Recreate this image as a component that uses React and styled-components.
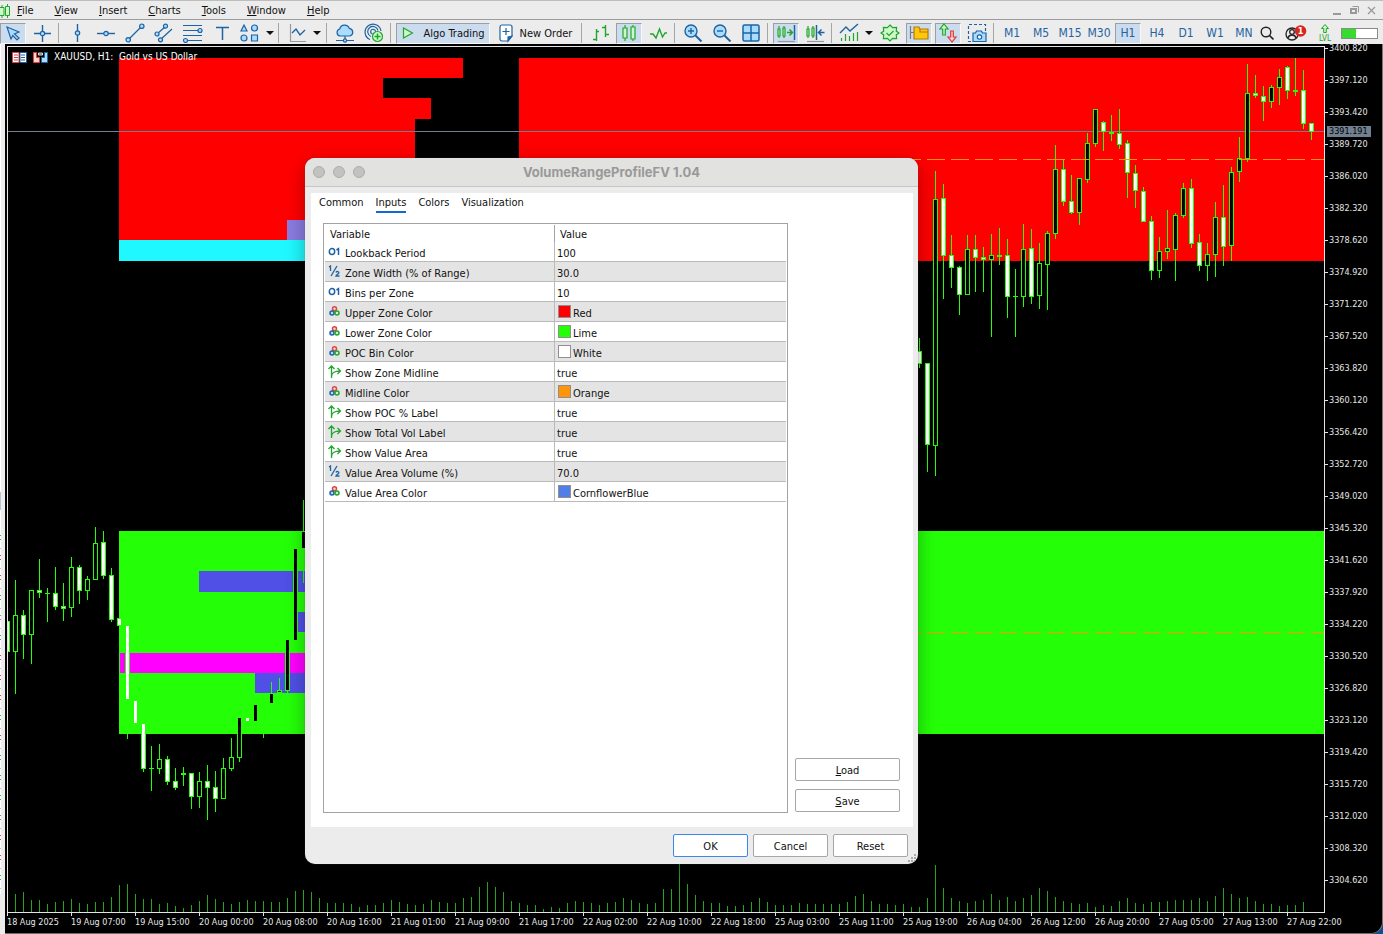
import React from 'react';
import styled, { createGlobalStyle } from 'styled-components';

const GlobalStyle = createGlobalStyle`
    * { box-sizing: border-box; }

    body {
        margin: 0;
        background: #000;
        font-family: "DejaVu Sans Condensed", "Noto Sans", sans-serif;
        font-size: 11px;
        color: #111;
    }

    button {
        font: inherit;
        color: inherit;
        cursor: pointer;
    }
`;

const BLUE = '#1f63a3';
const SKY = '#a9dcff';
const GREEN = '#22a52c';
const MINT = '#cdf8c8';
const LIME = '#24ff08';

/* ---------- layout ---------- */

const Terminal = styled.div`
    height: 100vh;
    display: flex;
    flex-direction: column;
    position: relative;
    overflow: hidden;
    background: #ececec;
`;

const MenuBar = styled.nav`
    display: flex;
    align-items: center;
    height: 20px;
    padding-top: 2px;
    border-top: 1px solid #bdbdbd;
    border-bottom: 1px solid #9c9c9c;
`;

const MenuIcon = styled.svg`
    width: 11px;
    height: 17px;
    margin-right: 6px;
`;

const MenuItem = styled.button`
    border: 0;
    padding: 0;
    margin-right: 21px;
    background: none;
    line-height: 14px;
`;

const WindowButtons = styled.div`
    display: flex;
    align-items: center;
    gap: 6px;
    margin-left: auto;
    padding: 0 5px 2px 0;
`;

const WindowButton = styled.button`
    border: 0;
    padding: 0;
    width: 12px;
    height: 12px;
    background: none;

    svg { display: block; }
`;

const ToolBar = styled.div`
    display: flex;
    align-items: center;
    gap: 3px;
    height: 24px;
    padding-top: 2px;
    flex: none;
`;

const Tool = styled.button`
    display: flex;
    align-items: center;
    justify-content: center;
    gap: ${p => p.$gap || 0}px;
    flex: none;
    width: ${p => p.$width || 26}px;
    height: 21px;
    padding: 0;
    border: 1px solid transparent;
    border-color: ${p => (p.$active ? '#9a9fa6 #f8f8f8 #f8f8f8 #9a9fa6' : 'transparent')};
    background: ${p => (p.$active ? '#cbdcee' : 'none')};
    white-space: nowrap;

    svg { display: block; flex: none; }
`;

const Timeframe = styled(Tool)`
    font-size: 12px;
    color: ${BLUE};
`;

const Separator = styled.span`
    flex: none;
    width: 3px;
    height: 20px;
    border-left: 1px solid #a5a5a5;
`;

const Status = styled.div`
    display: flex;
    align-items: center;
    gap: 9px;
    margin-left: auto;
    padding-right: 7px;
`;

const Meter = styled.div`
    width: 37px;
    height: 11px;
    border: 1px solid #8a8a8a;
    background: linear-gradient(to right, #37dd2e 41%, #fff 41%);
`;

const Workspace = styled.main`
    flex: 1;
    min-height: 0;
    display: grid;
    grid-template-columns: 5px minmax(0, 1fr);
    background: #0b4f94;
`;

const Chart = styled.section`
    position: relative;
    display: grid;
    grid-template-columns: minmax(0, 1fr) 57px;
    grid-template-rows: minmax(0, 1fr) 20px;
    background: #000;
    border-right: 1px solid #777;
    border-bottom: 1px solid #6b6b6b;
    border-bottom-right-radius: 12px;
    color: #e6e6e6;
    font-size: 9px;
    line-height: 12px;
`;

const Plot = styled.div`
    margin: 2px 0 0 2px;
    border: 1px solid #e4e4e4;
    min-height: 0;
    overflow: hidden;

    svg { display: block; width: 100%; height: 100%; }
`;

const ChartTitle = styled.div`
    position: absolute;
    top: 7px;
    left: 7px;
    display: flex;
    align-items: center;
    gap: 6px;
    color: #fff;
    font-size: 10px;
    white-space: pre;
`;

const PriceAxis = styled.div`
    position: relative;
    min-height: 0;
`;

const PriceList = styled.ul`
    list-style: none;
    margin: -2px 0 0;
    padding: 0;
`;

const Price = styled.li`
    display: flex;
    align-items: flex-start;
    height: 32px;

    &::before {
        content: "";
        width: 3px;
        height: 1px;
        margin: 6px 1px 0 0;
        background: #e4e4e4;
    }
`;

const CurrentPrice = styled.div`
    position: absolute;
    top: 82px;
    left: 2px;
    width: 44px;
    padding-left: 2px;
    line-height: 11px;
    background: #708090;
    color: #000;
`;

const TimeAxis = styled.ol`
    grid-column: 1 / -1;
    display: flex;
    list-style: none;
    margin: 0;
    padding: 0 0 0 2px;
    overflow: hidden;
`;

const Time = styled.li`
    flex: none;
    width: 64px;
    white-space: nowrap;

    &::before {
        content: "";
        display: block;
        width: 1px;
        height: 3px;
        background: #e4e4e4;
    }
`;

/* ---------- dialog ---------- */

const Dialog = styled.section`
    position: absolute;
    top: 158px;
    left: 305px;
    width: 613px;
    border-radius: 10px;
    overflow: hidden;
    background: #ececec;
    box-shadow: 0 0 1px #555, 0 6px 20px rgba(0, 0, 0, 0.3);
`;

const TitleBar = styled.header`
    display: flex;
    align-items: center;
    height: 29px;
    padding: 0 8px;
    background: #e2e2e0;
    border-bottom: 1px solid #c6c6c6;
`;

const Lights = styled.div`
    display: flex;
    gap: 8px;
    flex: 1;
`;

const Light = styled.button`
    width: 12px;
    height: 12px;
    padding: 0;
    border: 1px solid #adadab;
    border-radius: 50%;
    background: #c2c2c0;
`;

const Title = styled.h1`
    margin: 0;
    padding-bottom: 1px;
    font: bold 13px/16px Inter, sans-serif;
    color: #999;
`;

const Filler = styled.span`
    flex: 1;
`;

const Panel = styled.div`
    margin: 6px 5px 0 6px;
    padding: 2px 13px 14px 8px;
    background: #fff;
`;

const Tabs = styled.div`
    display: flex;
    gap: 12px;
    height: 28px;
    align-items: flex-start;
`;

const Tab = styled.button`
    border: 0;
    border-bottom: 2px solid ${p => (p.$active ? '#1368d6' : 'transparent')};
    padding: 0;
    background: none;
    line-height: 16px;
`;

const Columns = styled.div`
    display: flex;
    gap: 7px;
    padding-left: 4px;
`;

const Inputs = styled.div`
    flex: 1;
    min-height: 590px;
    padding: 1px;
    border: 1px solid #a3a3a3;
`;

const Table = styled.table`
    width: 100%;
    border-collapse: separate;
    border-spacing: 0;
    table-layout: fixed;
`;

const HeadCell = styled.th`
    height: 17px;
    padding: 2px 0 0 5px;
    font-weight: normal;
    text-align: left;
    line-height: 14px;
    width: ${p => p.$width || 'auto'};

    & + & { border-left: 1px solid #a3a3a3; }
`;

const Row = styled.tr`
    background: ${p => (p.$shaded ? '#e4e4e4' : '#fff')};
`;

const Cell = styled.td`
    height: 20px;
    padding: 0 0 0 ${p => p.$pad}px;
    border-bottom: 1px solid #bababa;

    & + & { border-left: 1px solid #bababa; }
`;

const CellBody = styled.div`
    display: flex;
    align-items: center;
    gap: ${p => p.$gap}px;
    height: 19px;
    line-height: 14px;

    span { padding-top: 4px; }
    svg { flex: none; }
`;

const Swatch = styled.i`
    width: 13px;
    height: 13px;
    margin-left: 1px;
    border: 1px solid #8f8f8f;
    background: ${p => p.$color};
`;

const SideButtons = styled.div`
    width: 105px;
    display: flex;
    flex-direction: column;
    justify-content: flex-end;
    gap: 8px;
    padding-bottom: 1px;
`;

const PushButton = styled.button`
    height: 23px;
    min-width: 75px;
    padding: 1px 0 0;
    border: 1px solid ${p => (p.$primary ? '#3b87f0' : '#a6a6a6')};
    border-radius: 2px;
    background: #fff;
`;

const Footer = styled.footer`
    position: relative;
    display: flex;
    justify-content: flex-end;
    gap: 5px;
    padding: 7px 10px 7px;
`;

const Grip = styled.svg`
    position: absolute;
    right: 1px;
    bottom: 1px;
`;

/* ---------- icons ---------- */

const Icon = ({ w = 20, color = BLUE, fill = 'none', children }) => (
    <svg width={w} height="20" viewBox={`0 0 ${w} 20`} fill={fill} stroke={color} strokeWidth="1.2" aria-hidden="true">
        {children}
    </svg>
);

const Caret = () => (
    <svg width="8" height="6" viewBox="0 0 8 6" aria-hidden="true"><path d="M0 1h8L4 5z" fill="#111" /></svg>
);

const PointerIcon = () => (
    <Icon fill={SKY}><path d="M4 4l12 5-4.500 2 4.500 4-2 2-4.200-4.500L8 16z" /></Icon>
);
const CrosshairIcon = () => (
    <Icon><path d="M10.500 2v17M2 10.500h17" strokeWidth="1.400" /><circle cx="10.500" cy="10.500" r="2.200" fill={SKY} /></Icon>
);
const VerticalIcon = () => (
    <Icon><path d="M10.500 1v18" strokeWidth="1.400" /><circle cx="10.500" cy="10" r="2.200" fill={SKY} /></Icon>
);
const HorizontalIcon = () => (
    <Icon><path d="M1 10.500h18" strokeWidth="1.400" /><circle cx="10" cy="10.500" r="2.200" fill={SKY} /></Icon>
);
const TrendIcon = () => (
    <Icon><path d="M4 16L17 3" /><g fill={SKY}><circle cx="3.200" cy="16.800" r="2.200" /><circle cx="16.800" cy="3.200" r="2.200" /></g></Icon>
);
const ChannelIcon = () => (
    <Icon>
        <path d="M3 11l9-8M6 17L18 6" />
        <g fill={SKY}><circle cx="3" cy="11" r="2" /><circle cx="11.500" cy="3.200" r="2" /><circle cx="6.500" cy="16.800" r="2" /></g>
    </Icon>
);
const FiboIcon = () => (
    <Icon>
        <path d="M0 2.500h19M0 7.500h19M0 12.500h19M4 17.500h15" />
        <g fill={SKY}><circle cx="17" cy="7.500" r="2" /><circle cx="2.500" cy="17.500" r="2" /></g>
    </Icon>
);
const TextIcon = () => (
    <Icon><path d="M4 4.500h13M10.500 4.500v12.500" strokeWidth="1.500" /></Icon>
);
const ShapesIcon = () => (
    <Icon fill={SKY}>
        <path d="M4 2L7 8H1z" /><circle cx="14.500" cy="5" r="3" /><circle cx="4" cy="15" r="3" /><path d="M11.500 12h6v6h-6z" />
    </Icon>
);
const IndicatorLineIcon = () => (
    <Icon><path d="M3.500 1v17.500H19" stroke="#999" /><path d="M5 10l4-4 4 6 5-5" strokeWidth="1.400" /></Icon>
);
const CloudIcon = () => (
    <Icon>
        <path d="M5 13a3.600 3.600 0 0 1-.3-7 5 5 0 0 1 9.600-.6A3.900 3.900 0 0 1 15 13z" fill={SKY} />
        <path d="M10 13v3M1 17.500h7m4 0h7" /><circle cx="10" cy="17.500" r="1.600" fill={SKY} />
    </Icon>
);
const SignalIcon = () => (
    <Icon>
        <path d="M6 16.500A8 8 0 1 1 17 8M7 13.500A5.200 5.200 0 1 1 14 7.500M8.500 11A2.400 2.400 0 1 1 11.500 9" />
        <circle cx="13.500" cy="13.500" r="5" fill={MINT} stroke={GREEN} />
        <path d="M13.500 10.500v6M10.500 13.500h6" stroke={GREEN} strokeWidth="1.500" />
    </Icon>
);
const PlayIcon = () => (
    <Icon w={14} color={GREEN} fill={MINT}><path d="M2.500 5l9 5-9 5z" /></Icon>
);
const NewOrderIcon = () => (
    <Icon w={14}>
        <path d="M3 2h8a2 2 0 0 1 2 2v9l-4 5H3a2 2 0 0 1-2-2V4a2 2 0 0 1 2-2z" fill="#fff" />
        <path d="M13 13l-4 5v-4z" fill={BLUE} /><path d="M7 5v7M3.500 8.500h7" />
    </Icon>
);
const BarsIcon = () => (
    <Icon color={GREEN}><path d="M6.500 6v12M3 16.500h3M6 8.500h3M15.500 2v12M12 4.500h3M15 11.500h4" strokeWidth="1.400" /></Icon>
);
const CandlesIcon = () => (
    <Icon color={GREEN} fill={MINT}>
        <path d="M6 2v16M14 2v16" /><path d="M4 5h4v10H4zM12 4h4v12h-4z" />
    </Icon>
);
const LineIcon = () => (
    <Icon color={GREEN}><path d="M2 11l3 0 3 4 3.500-9 3 8 2.500-4h2" strokeWidth="1.400" /></Icon>
);
const ZoomIcon = ({ plus }) => (
    <Icon>
        <path d="M12.500 12.500l6 6" strokeWidth="2" /><circle cx="8" cy="8" r="6" fill={SKY} strokeWidth="1.400" />
        <path d={plus ? 'M8 5v6M5 8h6' : 'M5 8h6'} strokeWidth="1.400" />
    </Icon>
);
const GridIcon = () => (
    <Icon fill={SKY}><rect x="2" y="2" width="16" height="16" rx="1.500" strokeWidth="1.500" /><path d="M10 2v16M2 10h16" strokeWidth="1.500" /></Icon>
);
const ShiftIcon = ({ back }) => (
    <Icon>
        <g stroke={GREEN} fill={MINT}><path d="M3 3v12M8 3v12" /><path d="M2 6h2v7H2zM7 5h2v8H7z" /></g>
        {back
            ? <path d="M11.500 2v15M19.500 9.500H14M16.500 6.500l-3 3 3 3" strokeWidth="1.500" />
            : <><path d="M18.500 2v15" strokeWidth="1.500" /><path d="M11 9.500h5M13.500 6.500l3 3-3 3" stroke={GREEN} strokeWidth="1.500" /></>}
        <path d="M2 18.500h17" stroke="#999" />
    </Icon>
);
const IndicatorsIcon = () => (
    <Icon>
        <path d="M1 10l6-6 4 4 8-7" strokeWidth="1.400" />
        <path d="M2.500 18v-3M6.500 18v-7M10.500 18v-5M14.500 18v-8M18.500 18V9" stroke={GREEN} />
    </Icon>
);
const BadgeIcon = () => (
    <Icon color={GREEN} fill={MINT}>
        <path d="M10 2l2.600 2.700 4-.2-.3 3.600L19 10l-2.700 1.900.3 3.600-4-.2L10 18l-2.600-2.700-4 .2.3-3.600L1 10l2.700-1.900-.3-3.600 4 .2z" />
        <path d="M6.500 10l2.500 2.500L13.500 8" />
    </Icon>
);
const FolderIcon = () => (
    <Icon>
        <path d="M1.500 3v13M1.500 9.500H5" stroke="#778" />
        <path d="M5 16V4h5l1 2h8v10z" fill="#ffc60a" stroke="#b97a08" /><path d="M11 6v3h8" stroke="#b97a08" />
    </Icon>
);
const ArrowsIcon = () => (
    <Icon>
        <path d="M6 1l4 5H7.300v6H4.700V6H2z" fill={MINT} stroke={GREEN} />
        <path d="M14 19l-4-5h2.700V8h2.600v6H18z" fill="#ffd0d0" stroke="#d83a3a" />
    </Icon>
);
const CameraIcon = () => (
    <Icon>
        <path d="M4 18.500H1.500V1.500h17V8" strokeDasharray="3 2" />
        <path d="M6 10h2.500l1-2h5l1 2H19v8.500H6z" fill={SKY} /><circle cx="12.500" cy="14" r="2.200" fill="#fff" />
    </Icon>
);
const SearchIcon = () => (
    <Icon w={14} color="#222"><circle cx="6" cy="9" r="4.800" strokeWidth="1.400" /><path d="M9.500 12.500l4 4" strokeWidth="1.600" /></Icon>
);
const AccountIcon = () => (
    <svg width="22" height="20" viewBox="0 0 22 20" fill="none" stroke="#222" strokeWidth="1.300" aria-hidden="true">
        <circle cx="7" cy="11" r="6" /><circle cx="7" cy="9" r="2.300" /><path d="M3 15c1-4 7-4 8 0" />
        <circle cx="15.500" cy="8" r="5.800" fill="#d8261c" stroke="none" />
        <text x="15.500" y="11" fill="#fff" stroke="none" fontSize="9" fontWeight="bold" textAnchor="middle">1</text>
    </svg>
);
const LevelIcon = () => (
    <svg width="14" height="20" viewBox="0 0 14 20" fill={MINT} stroke={GREEN} aria-hidden="true">
        <path d="M7 1.500l3.500 4H8.300v4H5.700v-4H3.500z" />
        <text x="7" y="18" fill={GREEN} stroke="none" fontSize="8" textAnchor="middle">LVL</text>
    </svg>
);

const IntIcon = () => (
    <svg width="13" height="13" viewBox="0 0 13 13" fill="none" stroke={BLUE} strokeWidth="1.500" aria-hidden="true">
        <ellipse cx="4" cy="6.500" rx="2.700" ry="3" /><path d="M8.500 5l2-1.300V10" />
    </svg>
);
const DoubleIcon = () => (
    <svg width="13" height="13" viewBox="0 0 13 13" fill="none" stroke={BLUE} strokeWidth="1.300" aria-hidden="true">
        <path d="M1 2l1.500-1v5M9 1L3 11M8 7.500c.5-1.500 3-1.200 2.800.3C10.600 9 8.500 9.500 8 11h3.500" />
    </svg>
);
const ColorIcon = () => (
    <svg width="13" height="13" viewBox="0 0 13 13" fill="none" strokeWidth="1.500" aria-hidden="true">
        <circle cx="6.500" cy="3.700" r="2" stroke="#db4545" fill="#ffd9d9" />
        <circle cx="4" cy="8" r="2" stroke={BLUE} fill={SKY} />
        <circle cx="9" cy="8" r="2" stroke={GREEN} fill={MINT} />
    </svg>
);
const BoolIcon = () => (
    <svg width="14" height="14" viewBox="0 0 14 14" fill="none" stroke={GREEN} strokeWidth="1.300" aria-hidden="true">
        <path d="M3.500 13V1.500M.5 4l3-3 3 3M3.500 12c0-4 2-6 9-6M9.500 3l3 3-3 3" />
    </svg>
);

const typeIcons = { int: IntIcon, double: DoubleIcon, color: ColorIcon, bool: BoolIcon };

/* ---------- data ---------- */

const menus = ['File', 'View', 'Insert', 'Charts', 'Tools', 'Window', 'Help'];
const timeframes = ['M1', 'M5', 'M15', 'M30', 'H1', 'H4', 'D1', 'W1', 'MN'];
const prices = Array.from({ length: 27 }, (_, i) => (3400.82 - i * 3.7).toFixed(3));
const times = [
    '18 Aug 2025', '19 Aug 07:00', '19 Aug 15:00', '20 Aug 00:00', '20 Aug 08:00', '20 Aug 16:00', '21 Aug 01:00',
    '21 Aug 09:00', '21 Aug 17:00', '22 Aug 02:00', '22 Aug 10:00', '22 Aug 18:00', '25 Aug 03:00', '25 Aug 11:00',
    '25 Aug 19:00', '26 Aug 04:00', '26 Aug 12:00', '26 Aug 20:00', '27 Aug 05:00', '27 Aug 13:00', '27 Aug 22:00',
];

const inputs = [
    ['int', 'Lookback Period', '100'],
    ['double', 'Zone Width (% of Range)', '30.0'],
    ['int', 'Bins per Zone', '10'],
    ['color', 'Upper Zone Color', 'Red', '#ff0000'],
    ['color', 'Lower Zone Color', 'Lime', '#24ff08'],
    ['color', 'POC Bin Color', 'White', '#ffffff'],
    ['bool', 'Show Zone Midline', 'true'],
    ['color', 'Midline Color', 'Orange', '#ff950a'],
    ['bool', 'Show POC % Label', 'true'],
    ['bool', 'Show Total Vol Label', 'true'],
    ['bool', 'Show Value Area', 'true'],
    ['double', 'Value Area Volume (%)', '70.0'],
    ['color', 'Value Area Color', 'CornflowerBlue', '#527ee8'],
];

const volumes = [
    18, 20, 12, 12, 8, 10, 11, 13, 9, 8, 10, 10, 15, 27, 28, 18, 13, 13, 8, 9,
    6, 4, 7, 11, 17, 13, 10, 8, 10, 12, 11, 11, 10, 10, 14, 21, 22, 20, 14, 9,
    9, 9, 8, 5, 7, 7, 9, 12, 10, 8, 7, 8, 12, 10, 9, 9, 14, 15, 25, 30,
    25, 20, 11, 9, 7, 7, 3, 5, 4, 9, 11, 10, 9, 7, 9, 10, 14, 12, 9, 8,
    9, 23, 23, 48, 28, 17, 11, 9, 9, 6, 6, 7, 10, 14, 10, 7, 7, 7, 9, 8,
    8, 8, 8, 8, 10, 16, 18, 11, 8, 8, 7, 8, 5, 5, 14, 47, 24, 14, 11, 9,
    11, 12, 18, 12, 15, 11, 14, 17, 24, 21, 15, 11, 9, 8, 9, 5, 7, 6, 11, 14,
    9, 8, 10, 10, 11, 12, 12, 12, 14, 11, 16, 24, 18, 14, 15, 11, 8, 8, 6, 7,
    7, 10,
];

// bar index, high, body top, body bottom, low, 1 = falling
const candles = [
    [0, 621, 621, 652, 652, 1], [1, 580, 615, 652, 694, 0], [2, 610, 615, 635, 659, 1], [3, 590, 590, 635, 664, 0],
    [4, 559, 590, 593, 598, 1], [5, 588, 593, 594, 622, 0], [6, 567, 593, 607, 610, 1], [7, 583, 606, 609, 621, 1],
    [8, 557, 567, 608, 617, 0], [9, 565, 567, 591, 604, 1], [10, 576, 579, 591, 600, 0], [11, 527, 543, 580, 580, 0],
    [12, 531, 542, 576, 579, 1], [13, 568, 575, 620, 622, 1], [14, 618, 618, 626, 626, 1], [15, 625, 625, 700, 739, 1],
    [16, 700, 700, 724, 724, 1], [17, 723, 723, 769, 772, 1], [18, 746, 768, 769, 791, 0], [19, 744, 759, 769, 774, 0],
    [20, 756, 759, 782, 785, 1], [21, 768, 781, 788, 790, 1], [22, 767, 773, 775, 786, 0], [23, 773, 773, 797, 809, 1],
    [24, 772, 781, 797, 808, 0], [25, 765, 781, 788, 820, 1], [26, 771, 787, 799, 812, 1], [27, 758, 768, 799, 799, 0],
    [28, 738, 757, 769, 771, 0], [29, 717, 717, 758, 762, 0], [30, 717, 717, 722, 722, 1], [31, 704, 704, 722, 722, 0],
    [32, 728, 728, 729, 738, 0], [33, 682, 693, 704, 704, 0], [34, 678, 690, 693, 693, 0], [35, 639, 639, 691, 693, 0],
    [36, 548, 548, 641, 641, 0], [37, 500, 531, 549, 583, 0],
    [114, 338, 351, 364, 368, 1], [115, 363, 363, 445, 472, 1], [116, 171, 199, 446, 476, 0], [117, 184, 198, 256, 299, 1],
    [118, 235, 255, 268, 288, 1], [119, 266, 267, 295, 315, 1], [120, 235, 249, 295, 295, 0], [121, 235, 249, 258, 292, 1],
    [122, 247, 257, 260, 292, 1], [123, 234, 255, 260, 337, 0], [124, 228, 255, 257, 265, 0], [125, 239, 255, 297, 318, 1],
    [126, 269, 296, 297, 337, 0], [127, 224, 249, 297, 307, 0], [128, 229, 248, 297, 304, 1], [129, 243, 263, 296, 309, 0],
    [130, 231, 233, 265, 310, 0], [131, 145, 169, 234, 239, 0], [132, 159, 169, 202, 206, 1], [133, 175, 201, 213, 214, 1],
    [134, 178, 178, 213, 225, 0], [135, 133, 143, 180, 183, 0], [136, 109, 109, 144, 147, 0], [137, 121, 122, 132, 151, 1],
    [138, 115, 132, 134, 141, 0], [139, 109, 133, 145, 149, 1], [140, 140, 143, 173, 198, 1], [141, 165, 173, 191, 208, 1],
    [142, 187, 191, 222, 222, 1], [143, 216, 221, 271, 280, 1], [144, 237, 251, 271, 278, 0], [145, 210, 248, 252, 259, 0],
    [146, 213, 215, 250, 281, 0], [147, 183, 188, 216, 218, 0], [148, 179, 188, 244, 248, 1], [149, 234, 242, 266, 271, 1],
    [150, 243, 254, 266, 281, 0], [151, 202, 217, 255, 277, 0], [152, 185, 217, 247, 266, 1], [153, 167, 172, 246, 261, 0],
    [154, 137, 158, 172, 182, 0], [155, 64, 93, 159, 162, 0], [156, 75, 93, 96, 98, 1], [157, 86, 96, 102, 121, 1],
    [158, 85, 87, 102, 108, 0], [159, 69, 77, 88, 105, 0], [160, 66, 67, 91, 99, 1], [161, 58, 90, 92, 96, 0],
    [162, 70, 90, 124, 129, 1], [163, 123, 123, 132, 140, 1],
];

// x, y, width, height, fill
const zones = [
    [119, 58, 344, 20, '#ff0000'], [119, 78, 264, 20, '#ff0000'], [119, 98, 312, 21, '#ff0000'],
    [119, 119, 296, 121, '#ff0000'], [519, 58, 805, 203, '#ff0000'],
    [287, 220, 128, 20, '#8a7be0'], [119, 240, 296, 21, '#20f8ff'],
    [119, 531, 1205, 203, LIME],
    [199, 571, 216, 21, '#504fe6'], [298, 612, 117, 20, '#504fe6'],
    [120, 653, 295, 20, '#ff00ff'], [255, 673, 160, 20, '#504fe6'],
];

const watchRows = 'grrgngrrrgrggggrrg'.split('');

/* ---------- parts ---------- */

const Candle = ({ data: [i, high, top, bottom, low, falling] }) => {
    const x = 7 + i * 8;
    return (
        <g>
            <rect x={x} y={high} width="1" height={low - high} fill={LIME} />
            <rect x={x - 2} y={top} width="5" height={bottom - top} fill={LIME} />
            {bottom - top > 2 && (
                <rect x={x - 1} y={top + 1} width="3" height={bottom - top - 2} fill={falling ? '#fff' : '#000'} />
            )}
        </g>
    );
};

const PriceChart = () => (
    <svg shapeRendering="crispEdges" role="img" aria-label="XAUUSD H1 candlesticks">
        <g transform="translate(-8 -47)">
            {zones.map(([x, y, w, h, fill]) => <rect key={`${x}-${y}`} x={x} y={y} width={w} height={h} fill={fill} />)}
            {volumes.map((h, i) => <rect key={i} x={15 + i * 8} y={912 - h} width="1" height={h} fill="#24a51c" />)}
            <rect x="8" y="131" width="3000" height="1" fill="#708090" />
            {candles.map(c => <Candle key={c[0]} data={c} />)}
            <path d="M903 159.500H1324M903 632.500H1324" stroke="#ff950a" strokeDasharray="18 6" />
        </g>
    </svg>
);

const WatchStrip = () => (
    <svg width="5" height="100%" aria-hidden="true">
        <rect width="5" height="100%" fill="#ececec" />
        <rect width="1" height="850" fill="#fff" />
        <rect y="448" width="1" height="18" fill="#b4c2da" />
        {watchRows.map((kind, i) => (
            <g key={i} fill={kind === 'g' ? '#35b13b' : kind === 'r' ? '#d8423c' : '#8c8c8c'}>
                <rect y={491 + i * 20} width="1" height="1" />
                <rect y={495 + i * 20} width="1" height="1" />
                <rect y={504 + i * 20} width="1" height="1" fill="#bbb" />
            </g>
        ))}
    </svg>
);

const Mnemonic = ({ children }) => <><u>{children[0]}</u>{children.slice(1)}</>;

const InputsTable = () => (
    <Table>
        <thead>
            <tr>
                <HeadCell $width="229px">Variable</HeadCell>
                <HeadCell>Value</HeadCell>
            </tr>
        </thead>
        <tbody>
            {inputs.map(([type, name, value, color], i) => {
                const TypeIcon = typeIcons[type];
                return (
                    <Row key={name} $shaded={i % 2 === 1}>
                        <Cell $pad={3}><CellBody $gap={type === 'bool' ? 3 : 4}><TypeIcon /><span>{name}</span></CellBody></Cell>
                        <Cell $pad={2}><CellBody $gap={2}>{color && <Swatch $color={color} />}<span>{value}</span></CellBody></Cell>
                    </Row>
                );
            })}
        </tbody>
    </Table>
);

const PropertiesDialog = () => (
    <Dialog role="dialog" aria-labelledby="dialog-title">
        <TitleBar>
            <Lights>
                <Light aria-label="Close" />
                <Light aria-label="Minimize" />
                <Light aria-label="Zoom" />
            </Lights>
            <Title id="dialog-title">VolumeRangeProfileFV 1.04</Title>
            <Filler />
        </TitleBar>
        <Panel>
            <Tabs role="tablist">
                {['Common', 'Inputs', 'Colors', 'Visualization'].map(tab => (
                    <Tab key={tab} role="tab" aria-selected={tab === 'Inputs'} $active={tab === 'Inputs'}>{tab}</Tab>
                ))}
            </Tabs>
            <Columns>
                <Inputs><InputsTable /></Inputs>
                <SideButtons>
                    <PushButton><Mnemonic>Load</Mnemonic></PushButton>
                    <PushButton><Mnemonic>Save</Mnemonic></PushButton>
                </SideButtons>
            </Columns>
        </Panel>
        <Footer>
            <PushButton $primary>OK</PushButton>
            <PushButton>Cancel</PushButton>
            <PushButton>Reset</PushButton>
            <Grip width="9" height="9" fill="#aaa" aria-hidden="true">
                <path d="M6 0h2v2H6zM3 3h2v2H3zM6 3h2v2H6zM0 6h2v2H0zM3 6h2v2H3zM6 6h2v2H6z" />
            </Grip>
        </Footer>
    </Dialog>
);

const App = () => (
    <Terminal>
        <GlobalStyle />
        <MenuBar>
            <MenuIcon viewBox="0 0 11 17" fill={MINT} stroke={GREEN} aria-hidden="true">
                <path d="M2 2v13M7.500 1v14" /><path d="M-1 4.500h5v8h-5zM5.500 3.500h4v9h-4z" />
            </MenuIcon>
            {menus.map(m => <MenuItem key={m}><Mnemonic>{m}</Mnemonic></MenuItem>)}
            <WindowButtons>
                <WindowButton aria-label="Minimize">
                    <svg width="12" height="12"><path d="M3 9h8v2H3z" fill="#999" /></svg>
                </WindowButton>
                <WindowButton aria-label="Restore">
                    <svg width="12" height="12" fill="none" stroke="#999"><path d="M4.500 2.500h6v6" /><path d="M3 5h5v4H3z" strokeWidth="2" /></svg>
                </WindowButton>
                <WindowButton aria-label="Close chart">
                    <svg width="12" height="12" stroke="#999" strokeWidth="1.300"><path d="M2 3l7 7M9 3l-7 7" /></svg>
                </WindowButton>
            </WindowButtons>
        </MenuBar>
        <ToolBar role="toolbar">
            <Tool $active aria-label="Cursor"><PointerIcon /></Tool>
            <Tool aria-label="Crosshair"><CrosshairIcon /></Tool>
            <Separator />
            <Tool aria-label="Vertical line"><VerticalIcon /></Tool>
            <Tool aria-label="Horizontal line"><HorizontalIcon /></Tool>
            <Tool aria-label="Trendline"><TrendIcon /></Tool>
            <Tool aria-label="Channel"><ChannelIcon /></Tool>
            <Tool aria-label="Fibonacci"><FiboIcon /></Tool>
            <Tool aria-label="Text"><TextIcon /></Tool>
            <Tool $width={37} $gap={6} aria-label="Shapes"><ShapesIcon /><Caret /></Tool>
            <Separator />
            <Tool $width={39} $gap={6} aria-label="Chart objects"><IndicatorLineIcon /><Caret /></Tool>
            <Separator />
            <Tool aria-label="VPS"><CloudIcon /></Tool>
            <Tool aria-label="Signals"><SignalIcon /></Tool>
            <Separator />
            <Tool $active $width={94} $gap={8}><PlayIcon />Algo Trading</Tool>
            <Tool $width={85} $gap={7}><NewOrderIcon />New Order</Tool>
            <Separator />
            <Tool aria-label="Bar chart"><BarsIcon /></Tool>
            <Tool $active aria-label="Candlesticks"><CandlesIcon /></Tool>
            <Tool aria-label="Line chart"><LineIcon /></Tool>
            <Separator />
            <Tool aria-label="Zoom in"><ZoomIcon plus /></Tool>
            <Tool aria-label="Zoom out"><ZoomIcon /></Tool>
            <Tool aria-label="Tile windows"><GridIcon /></Tool>
            <Separator />
            <Tool $active aria-label="Auto scroll"><ShiftIcon /></Tool>
            <Tool aria-label="Chart shift"><ShiftIcon back /></Tool>
            <Separator />
            <Tool $width={37} $gap={6} aria-label="Indicators"><IndicatorsIcon /><Caret /></Tool>
            <Tool aria-label="Experts"><BadgeIcon /></Tool>
            <Tool $active aria-label="Templates"><FolderIcon /></Tool>
            <Tool $active aria-label="Trade levels"><ArrowsIcon /></Tool>
            <Tool aria-label="Screenshot"><CameraIcon /></Tool>
            <Separator />
            {timeframes.map(t => <Timeframe key={t} $active={t === 'H1'}>{t}</Timeframe>)}
            <Status>
                <Tool $width={14} aria-label="Search"><SearchIcon /></Tool>
                <Tool $width={26} aria-label="Account"><AccountIcon /></Tool>
                <LevelIcon />
                <Meter />
            </Status>
        </ToolBar>
        <Workspace>
            <WatchStrip />
            <Chart>
                <Plot><PriceChart /></Plot>
                <PriceAxis>
                    <PriceList>{prices.map(p => <Price key={p}>{p}</Price>)}</PriceList>
                    <CurrentPrice>3391.191</CurrentPrice>
                </PriceAxis>
                <TimeAxis>{times.map(t => <Time key={t}>{t}</Time>)}</TimeAxis>
                <ChartTitle>
                    <svg width="15" height="11" viewBox="0 0 15 11" aria-hidden="true">
                        <path d="M.5.500h6.500v10H.5z" fill="#fff" stroke="#d8423c" /><path d="M8 .500h6.500v10H8z" fill="#fff" stroke={BLUE} />
                        <path d="M2 3h4M2 5.500h4M2 8h4" stroke="#d8423c" /><path d="M9 3h4M9 5.500h4M9 8h4" stroke={BLUE} />
                    </svg>
                    <svg width="15" height="11" viewBox="0 0 15 11" aria-hidden="true">
                        <path d="M.5.500h3v5h3v5h-6z" fill="#ffd0d0" stroke="#d8423c" />
                        <path d="M14.500.500h-3v5h-3v5h6z" fill={SKY} stroke={BLUE} />
                        <path d="M5.500 1h4v2h-4z" fill="#555" stroke="#ddd" />
                    </svg>
                    <span>XAUUSD, H1:  Gold vs US Dollar</span>
                </ChartTitle>
            </Chart>
        </Workspace>
        <PropertiesDialog />
    </Terminal>
);

export default App;
